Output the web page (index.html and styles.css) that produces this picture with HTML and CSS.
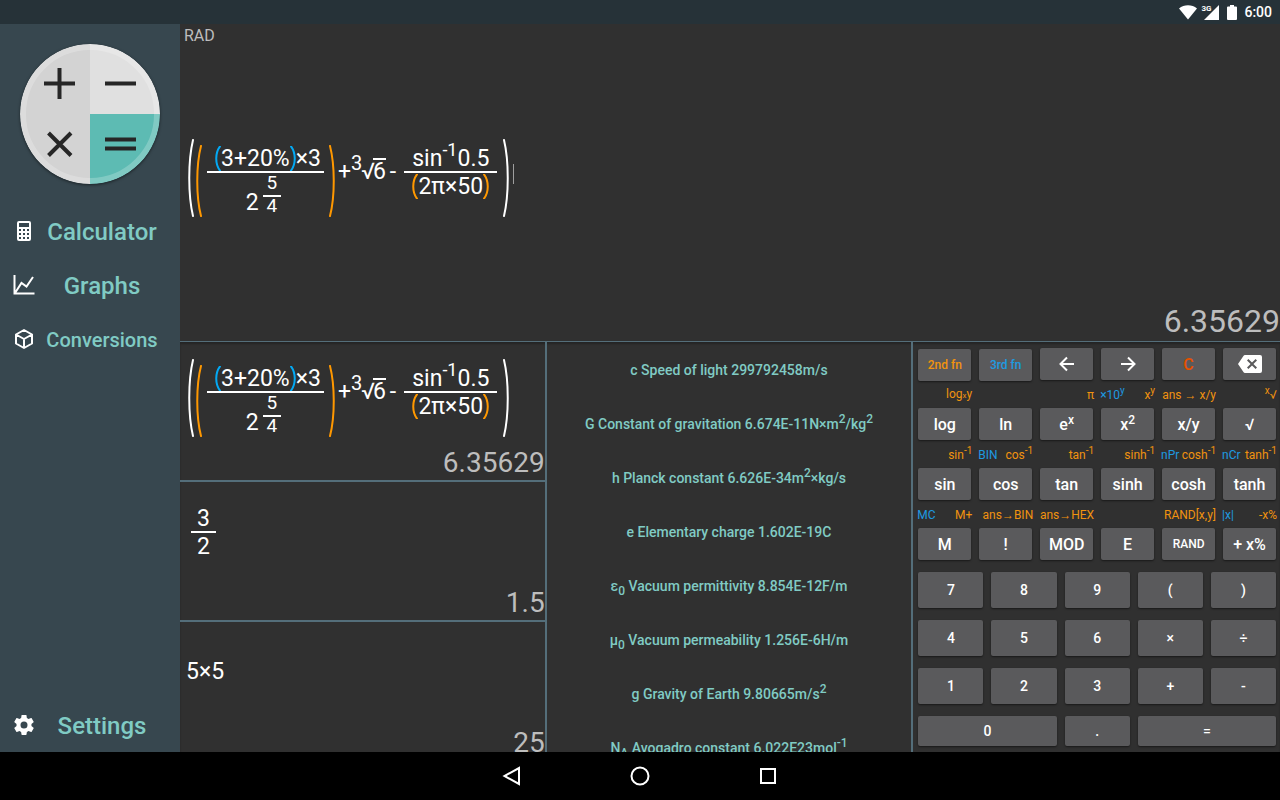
FILE: index.html
```html
<!DOCTYPE html>
<html lang="en">
<head>
<meta charset="utf-8">
<title>Calculator</title>
<link rel="stylesheet" href="styles.css">
</head>
<body>
<svg class="defs" aria-hidden="true">
  <symbol id="paren-open" viewBox="0 0 6 78" preserveAspectRatio="none"><path d="M5 1C0 22 0 56 5 77" fill="none" stroke="currentColor" stroke-width="2" stroke-linecap="round" vector-effect="non-scaling-stroke"/></symbol>
  <symbol id="paren-close" viewBox="0 0 6 78" preserveAspectRatio="none"><path d="M1 1C6 22 6 56 1 77" fill="none" stroke="currentColor" stroke-width="2" stroke-linecap="round" vector-effect="non-scaling-stroke"/></symbol>
</svg>

<header class="statusbar">
  <svg width="18" height="15" viewBox="0 0 18 15"><path d="M0 3.500C5 -.8 13 -.8 18 3.500L9 14.500Z" fill="#fff"/></svg>
  <span class="signal"><span class="signal-type">3G</span><svg width="15" height="15" viewBox="0 0 15 15"><path d="M15 0V15H0Z" fill="#fff"/></svg></span>
  <svg class="battery" width="10" height="15" viewBox="0 0 10 15"><path d="M3 0H7V1.500H9Q10 1.500 10 2.500V14Q10 15 9 15H1Q0 15 0 14V2.500Q0 1.500 1 1.500H3Z" fill="#fff"/></svg>
  <time>6:00</time>
</header>

<div class="app">
  <aside class="sidebar">
    <svg class="logo" viewBox="0 0 140 140" aria-hidden="true">
      <clipPath id="disc"><circle cx="70" cy="70" r="70"/></clipPath>
      <g clip-path="url(#disc)">
        <rect width="70" height="140" fill="#d3d3d3"/>
        <rect x="70" width="70" height="70" fill="#e0e0e0"/>
        <rect x="70" y="70" width="70" height="70" fill="#5dbbb3"/>
        <circle cx="70" cy="70" r="67" fill="none" stroke="#fff" stroke-opacity=".22" stroke-width="6"/>
      </g>
      <path d="M24 39.500H55M39.500 24V55M85 39.500H116M85 95.500H116M85 104.500H116M28.500 89L51 111.500M51 89L28.500 111.500" stroke="#262626" stroke-width="4" fill="none"/>
    </svg>
    <nav>
      <a class="item" href="#calculator">
        <svg viewBox="0 0 24 24"><path fill="#fff" fill-rule="evenodd" d="M7 2H17Q19 2 19 4V20Q19 22 17 22H7Q5 22 5 20V4Q5 2 7 2ZM7 4V8H17V4ZM7 10V12H9V10ZM11 10V12H13V10ZM15 10V12H17V10ZM7 14V16H9V14ZM11 14V16H13V14ZM15 14V16H17V14ZM7 18V20H9V18ZM11 18V20H13V18ZM15 18V20H17V18Z"/></svg>
        <span>Calculator</span>
      </a>
      <a class="item" href="#graphs">
        <svg viewBox="0 0 24 24"><path d="M2.500 2V20.500H22.500M3 20L9.500 10L14.500 13.500L21 4" fill="none" stroke="#fff" stroke-width="2"/></svg>
        <span>Graphs</span>
      </a>
      <a class="item small" href="#conversions">
        <svg viewBox="0 0 24 24"><path d="M12 3L20 7.500V16.500L12 21L4 16.500V7.500ZM4 7.500L12 12L20 7.500M12 12V21" fill="none" stroke="#fff" stroke-width="2" stroke-linejoin="round"/></svg>
        <span>Conversions</span>
      </a>
    </nav>
    <a class="item settings" href="#settings">
      <svg viewBox="0 0 24 24"><path fill="#fff" d="M12 15.500A3.500 3.500 0 0 1 8.500 12 3.500 3.500 0 0 1 12 8.500 3.500 3.500 0 0 1 15.500 12 3.500 3.500 0 0 1 12 15.500M19.430 12.970C19.470 12.650 19.500 12.330 19.500 12 19.500 11.670 19.470 11.340 19.430 11L21.540 9.370C21.730 9.220 21.780 8.950 21.660 8.730L19.660 5.270C19.540 5.050 19.270 4.960 19.050 5.050L16.560 6.050C16.040 5.660 15.500 5.320 14.870 5.070L14.500 2.420C14.460 2.180 14.250 2 14 2H10C9.750 2 9.540 2.180 9.500 2.420L9.130 5.070C8.500 5.320 7.960 5.660 7.440 6.050L4.950 5.050C4.730 4.960 4.460 5.050 4.340 5.270L2.340 8.730C2.210 8.950 2.270 9.220 2.460 9.370L4.570 11C4.530 11.340 4.500 11.670 4.500 12 4.500 12.330 4.530 12.650 4.570 12.970L2.460 14.630C2.270 14.780 2.210 15.050 2.340 15.270L4.340 18.730C4.460 18.950 4.730 19.030 4.950 18.950L7.440 17.940C7.960 18.340 8.500 18.680 9.130 18.930L9.500 21.580C9.540 21.820 9.750 22 10 22H14C14.250 22 14.460 21.820 14.500 21.580L14.870 18.930C15.500 18.670 16.040 18.340 16.560 17.940L19.050 18.950C19.270 19.030 19.540 18.950 19.660 18.730L21.660 15.270C21.780 15.050 21.730 14.780 21.540 14.630Z"/></svg>
      <span>Settings</span>
    </a>
  </aside>

  <main class="main">
    <section class="display">
      <div class="mode">RAD</div>
      <div class="entry">
        <div class="eq">
          <svg class="paren"><use href="#paren-open"/></svg>
          <div class="group">
            <svg class="paren orange"><use href="#paren-open"/></svg>
            <div class="frac">
              <div class="num indent"><svg class="paren blue"><use href="#paren-open"/></svg>3+20%<svg class="paren blue"><use href="#paren-close"/></svg>×3</div>
              <div class="den power"><span class="base">2</span><span class="exp"><span>5</span><span>4</span></span></div>
            </div>
            <svg class="paren orange"><use href="#paren-close"/></svg>
          </div>
          <div class="term"><span>+</span><span class="root-index">3</span><span>√</span><span class="radicand">6</span><span class="minus">-</span></div>
          <div class="frac wide">
            <div class="num">sin<sup>-1</sup>0.5</div>
            <div class="den"><svg class="paren orange"><use href="#paren-open"/></svg>2π×50<svg class="paren orange"><use href="#paren-close"/></svg></div>
          </div>
          <svg class="paren"><use href="#paren-close"/></svg>
          <span class="caret"></span>
        </div>
      </div>
      <output class="result">6.35629</output>
    </section>

    <div class="panels">
      <section class="history">
        <article>
          <div class="eq">
            <svg class="paren"><use href="#paren-open"/></svg>
            <div class="group">
              <svg class="paren orange"><use href="#paren-open"/></svg>
              <div class="frac">
                <div class="num indent"><svg class="paren blue"><use href="#paren-open"/></svg>3+20%<svg class="paren blue"><use href="#paren-close"/></svg>×3</div>
                <div class="den power"><span class="base">2</span><span class="exp"><span>5</span><span>4</span></span></div>
              </div>
              <svg class="paren orange"><use href="#paren-close"/></svg>
            </div>
            <div class="term"><span>+</span><span class="root-index">3</span><span>√</span><span class="radicand">6</span><span class="minus">-</span></div>
            <div class="frac wide">
              <div class="num">sin<sup>-1</sup>0.5</div>
              <div class="den"><svg class="paren orange"><use href="#paren-open"/></svg>2π×50<svg class="paren orange"><use href="#paren-close"/></svg></div>
            </div>
            <svg class="paren"><use href="#paren-close"/></svg>
          </div>
          <output>6.35629</output>
        </article>
        <article>
          <div class="eq">
            <div class="frac simple"><div class="num">3</div><div class="den">2</div></div>
          </div>
          <output>1.5</output>
        </article>
        <article>
          <div class="eq plain"><div class="term">5×5</div></div>
          <output>25</output>
        </article>
      </section>

      <section class="constants">
        <button>c Speed of light 299792458m/s</button>
        <button>G Constant of gravitation 6.674E-11N×m<sup>2</sup>/kg<sup>2</sup></button>
        <button>h Planck constant 6.626E-34m<sup>2</sup>×kg/s</button>
        <button>e Elementary charge 1.602E-19C</button>
        <button>ε<sub>0</sub> Vacuum permittivity 8.854E-12F/m</button>
        <button>μ<sub>0</sub> Vacuum permeability 1.256E-6H/m</button>
        <button>g Gravity of Earth 9.80665m/s<sup>2</sup></button>
        <button>N<sub>A</sub> Avogadro constant 6.022E23mol<sup>-1</sup></button>
      </section>

      <section class="keypad">
        <div class="keys functions">
          <button class="shift orange">2nd fn</button>
          <button class="shift blue">3rd fn</button>
          <button aria-label="Left"><svg viewBox="0 0 24 24"><path d="M19 12H6M12 5.500L5.500 12L12 18.500" fill="none" stroke="#fff" stroke-width="2"/></svg></button>
          <button aria-label="Right"><svg viewBox="0 0 24 24"><path d="M5 12H18M12 5.500L18.500 12L12 18.500" fill="none" stroke="#fff" stroke-width="2"/></svg></button>
          <button class="clear">C</button>
          <button aria-label="Delete"><svg viewBox="0 0 24 24"><path fill="#fff" fill-rule="evenodd" d="M22 3H7C6.310 3 5.770 3.350 5.410 3.880L0 12L5.410 20.110C5.770 20.640 6.310 21 7 21H22A2 2 0 0 0 24 19V5A2 2 0 0 0 22 3M19 15.590L17.590 17L14 13.410L10.410 17L9 15.590L12.590 12L9 8.410L10.410 7L14 10.590L17.590 7L19 8.410L15.410 12"/></svg></button>

          <div class="hint"><span class="second">log<small>x</small>y</span></div>
          <div class="hint"></div>
          <div class="hint"><span class="second">π</span></div>
          <div class="hint"><span class="third">×10<sup>y</sup></span><span class="second">x<sup>y</sup></span></div>
          <div class="hint"><span class="second">ans → x/y</span></div>
          <div class="hint"><span class="second"><sup>x</sup>√</span></div>
          <button>log</button><button>ln</button><button>e<sup>x</sup></button><button>x<sup>2</sup></button><button>x/y</button><button>√</button>

          <div class="hint"><span class="second">sin<sup>-1</sup></span></div>
          <div class="hint"><span class="third">BIN</span><span class="second">cos<sup>-1</sup></span></div>
          <div class="hint"><span class="second">tan<sup>-1</sup></span></div>
          <div class="hint"><span class="second">sinh<sup>-1</sup></span></div>
          <div class="hint"><span class="third">nPr</span><span class="second">cosh<sup>-1</sup></span></div>
          <div class="hint"><span class="third">nCr</span><span class="second">tanh<sup>-1</sup></span></div>
          <button>sin</button><button>cos</button><button>tan</button><button>sinh</button><button>cosh</button><button>tanh</button>

          <div class="hint"><span class="third">MC</span><span class="second">M+</span></div>
          <div class="hint"><span class="second">ans→BIN</span></div>
          <div class="hint"><span class="second">ans→HEX</span></div>
          <div class="hint"></div>
          <div class="hint"><span class="second">RAND[x,y]</span></div>
          <div class="hint"><span class="third">|x|</span><span class="second">-x%</span></div>
          <button>M</button><button>!</button><button>MOD</button><button>E</button><button class="tiny">RAND</button><button>+ x%</button>
        </div>
        <div class="keys digits">
          <button>7</button><button>8</button><button>9</button><button>(</button><button>)</button>
          <button>4</button><button>5</button><button>6</button><button>×</button><button>÷</button>
          <button>1</button><button>2</button><button>3</button><button>+</button><button>-</button>
          <button class="double">0</button><button>.</button><button class="double">=</button>
        </div>
      </section>
    </div>
  </main>
</div>

<footer class="navbar">
  <button aria-label="Back"><svg viewBox="0 0 24 24"><path d="M19 4V20L4.500 12Z" fill="none" stroke="#fff" stroke-width="2"/></svg></button>
  <button aria-label="Home"><svg viewBox="0 0 24 24"><circle cx="12" cy="12" r="8.500" fill="none" stroke="#fff" stroke-width="2"/></svg></button>
  <button aria-label="Recent apps"><svg viewBox="0 0 24 24"><path d="M5 5H19V19H5Z" fill="none" stroke="#fff" stroke-width="2"/></svg></button>
</footer>
</body>
</html>
```
FILE: styles.css
```css
* { box-sizing: border-box; }

body {
  margin: 0;
  height: 100vh;
  display: flex;
  flex-direction: column;
  background: #303030;
  color: #fff;
  font-family: Roboto, "Noto Sans", sans-serif;
}

button {
  border: 0;
  padding: 0;
  background: none;
  color: inherit;
  font: inherit;
}

sup, sub { line-height: 0; }

.defs { display: none; }
.orange { color: #ff9800; }
.blue { color: #03a9f4; }

/* Status bar */
.statusbar {
  flex: none;
  height: 24px;
  padding: 0 8px;
  display: flex;
  justify-content: flex-end;
  align-items: center;
  background: #263238;
  font-size: 14px;
  font-weight: 500;
}
.signal {
  position: relative;
  display: flex;
  margin-left: 7px;
}
.signal-type {
  position: absolute;
  left: -3px;
  top: 0;
  font-size: 8px;
  line-height: 8px;
  font-weight: 700;
}
.battery { margin: 0 7px 0 8px; }

/* Layout */
.app {
  flex: 1;
  min-height: 0;
  display: grid;
  grid-template-columns: 180px minmax(0, 1fr);
}
.sidebar {
  display: flex;
  flex-direction: column;
  background: #37474f;
}
.logo {
  margin: 20px;
  border-radius: 50%;
  box-shadow: 0 1px 3px rgba(0, 0, 0, .5);
}
.item {
  height: 54px;
  padding: 0 12px;
  display: flex;
  align-items: center;
  color: #80cbc4;
  font-size: 24px;
  font-weight: 500;
  text-decoration: none;
}
.item svg {
  flex: none;
  width: 24px;
  height: 24px;
}
.item span {
  flex: 1;
  padding-top: 2px;
  text-align: center;
}
.item.small { font-size: 20px; }
.settings { margin-top: auto; }

.main {
  min-height: 0;
  display: grid;
  grid-template-rows: minmax(0, 1fr) 410px;
}

/* Main display */
.display {
  display: flex;
  flex-direction: column;
  border-bottom: 1px solid #546e7a;
}
.mode {
  padding-left: 4px;
  color: #bdbdbd;
  font-size: 16px;
  line-height: 24px;
}
.entry {
  flex: 1;
  display: flex;
  align-items: center;
}
.result {
  text-align: right;
  color: #bdbdbd;
  font-size: 32px;
  line-height: 40px;
}

/* Expressions */
.eq {
  display: flex;
  align-items: flex-start;
  padding-left: 8px;
  font-size: 23px;
  line-height: 24px;
}
.entry .eq { padding-top: 7px; }
.paren {
  flex: none;
  align-self: stretch;
  width: 6px;
  height: auto;
}
.eq > .paren { height: 78px; }
.group {
  display: flex;
  height: 72px;
  margin: 6px 3px 0 2px;
}
.group > .paren { height: 72px; }
.frac {
  display: flex;
  flex-direction: column;
  text-align: center;
}
.num, .den {
  display: flex;
  justify-content: center;
}
.num {
  height: 28px;
  padding-top: 2px;
  border-bottom: 2px solid #fff;
}
.num .paren, .den .paren { height: 25px; }
.num .paren { margin-top: -1px; }
.group .frac { margin: 0 5px; }
.num.indent {
  padding-left: 8px;
  padding-right: 3px;
}
.den { padding-top: 2px; }
.den .paren { margin-top: -1px; }
.num sup {
  font-size: 18px;
  margin-top: -9px;
  line-height: 24px;
}
.den.power {
  gap: 4px;
  padding: 0 4px 0 0;
}
.base { padding-top: 18px; }
.exp {
  display: flex;
  flex-direction: column;
  font-size: 19px;
  line-height: 20px;
}
.exp span { padding: 0 4px; }
.exp span:first-child {
  padding-bottom: 2px;
  border-bottom: 2px solid #fff;
}
.exp span:last-child { margin-top: -1px; }
.term {
  display: flex;
  margin-top: 21px;
}
.root-index {
  font-size: 20px;
  margin: -9px -1px 0 0;
}
.radicand {
  border-top: 2px solid #fff;
  margin: -2px 0 0 -2px;
}
.minus { padding: 0 8px 0 4px; }
.wide { margin: 6px 6px 0 0; }
.wide .num, .wide .den { padding-left: 8px; padding-right: 8px; }
.simple { margin: 6px 0 0 3px; }
.simple .num, .simple .den { padding-left: 6px; padding-right: 6px; }
.eq.plain { padding-left: 6px; }
.caret {
  width: 1px;
  height: 20px;
  margin: 25px 0 0 4px;
  background: #9e9e9e;
}

/* Lower panels */
.panels {
  min-height: 0;
  display: grid;
  grid-template-columns: repeat(3, minmax(0, 1fr));
  box-shadow: inset 0 2px 2px rgba(0, 0, 0, .25);
}
.history, .constants {
  min-height: 0;
  overflow: hidden;
  border-right: 2px solid #546e7a;
}
.history article {
  height: 140px;
  padding-top: 17px;
  display: flex;
  flex-direction: column;
  border-bottom: 2px solid #546e7a;
}
.history output {
  margin-top: auto;
  text-align: right;
  color: #bdbdbd;
  font-size: 28px;
  line-height: 34px;
}
.constants { padding-top: 1px; }
.constants button {
  display: block;
  width: 100%;
  height: 54px;
  color: #80cbc4;
  font-size: 14px;
  font-weight: 500;
}
.constants sup, .constants sub { font-size: 12px; }

/* Keypad */
.keypad {
  display: flex;
  flex-direction: column;
  gap: 12px;
  padding: 6px 4px 6px 5px;
}
.keys {
  display: grid;
  column-gap: 8px;
}
.keys button {
  display: flex;
  justify-content: center;
  align-items: center;
  border-radius: 2px;
  background: #5a5a5c;
  box-shadow: 0 1px 2px rgba(0, 0, 0, .5);
  font-weight: 500;
}
.keys sup {
  font-size: 75%;
  margin-bottom: 8px;
}
.functions {
  grid-template-columns: repeat(6, minmax(0, 1fr));
  grid-template-rows: 32px repeat(3, 28px 32px);
}
.functions button { font-size: 16px; }
.functions button svg {
  width: 24px;
  height: 24px;
}
.functions .shift {
  font-size: 12px;
  margin: 1px 0 -1px;
}
.functions .orange { color: #f0930f; }
.functions .blue { color: #1e9ae0; }
.functions .clear { color: #e65100; }
.functions .tiny { font-size: 12px; }
.hint {
  display: flex;
  align-items: center;
  margin: 1px -1px 0;
  font-size: 12px;
  line-height: 20px;
  white-space: nowrap;
}
.hint small { font-size: 8px; }
.hint sup { font-size: 10px; }
.second {
  margin-left: auto;
  color: #f0930f;
}
.third { color: #1e9ae0; }
.digits {
  flex: 1;
  grid-template-columns: repeat(5, minmax(0, 1fr));
  grid-template-rows: 6fr 6fr 6fr 5fr;
  row-gap: 12px;
}
.digits button { font-size: 14px; }
.double { grid-column: span 2; }

/* Navigation bar */
.navbar {
  flex: none;
  height: 48px;
  display: flex;
  justify-content: center;
  align-items: center;
  gap: 104px;
  background: #000;
}
.navbar button, .navbar svg {
  display: block;
  width: 24px;
  height: 24px;
}
```
